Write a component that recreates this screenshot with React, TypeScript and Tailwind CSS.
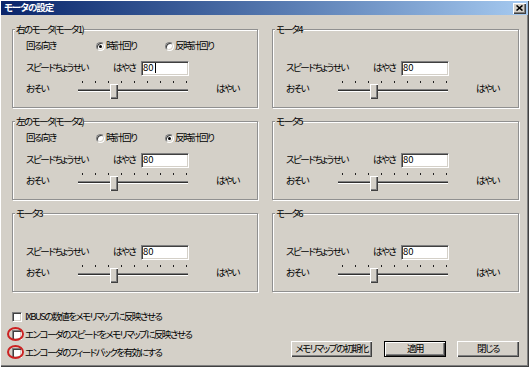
import React from 'react'

////////////////////////////////////////////////////////////////////////////////
// Interface & Data

type Direction = 'cw' | 'ccw'

interface Motor {
  title: string
  direction?: Direction
  speed: string
  caret?: boolean
}

// grid order: row by row, left then right
const MOTORS: Motor[] = [
  { title: '右のモータ(モータ1)', direction: 'cw', speed: '80', caret: true },
  { title: 'モータ4', speed: '80' },
  { title: '左のモータ(モータ2)', direction: 'ccw', speed: '80' },
  { title: 'モータ5', speed: '80' },
  { title: 'モータ3', speed: '80' },
  { title: 'モータ6', speed: '80' }
]

const TICKS = [0, 1, 2, 3, 4, 5, 6, 7, 8]

const SUNKEN =
  'border border-t-[#808080] border-l-[#808080] border-b-white border-r-white shadow-[inset_1px_1px_0_#404040,inset_-1px_-1px_0_#d4d0c8]'
const RAISED =
  'bg-[#d4d0c8] shadow-[inset_1px_1px_0_#fff,inset_-1px_-1px_0_#404040,inset_-2px_-2px_0_#808080]'

////////////////////////////////////////////////////////////////////////////////
// Components

const TitleBar = () => (
  <div className="mx-[1px] mt-[1px] h-[14px] flex items-center pl-[3px] pr-[2px] bg-linear-to-r from-[#0a246a] to-[#a6caf0]">
    <span className="text-white font-bold tracking-[-1px]">モータの設定</span>
    <button className={`ml-auto w-[13px] h-[11px] flex items-center justify-center ${RAISED}`}>
      <svg width="7" height="6" viewBox="0 0 7 6">
        <path d="M0.5 0.5 L6.5 5.5 M6.5 0.5 L0.5 5.5" stroke="black" strokeWidth="1.6" />
      </svg>
    </button>
  </div>
)

const Radio = ({ checked }: { checked?: boolean }) => (
  <span className={`w-[9px] h-[9px] rounded-full bg-white flex items-center justify-center ${SUNKEN}`}>
    {checked && <span className="w-[3px] h-[3px] rounded-full bg-black" />}
  </span>
)

const SpeedInput = ({ value, caret }: { value: string; caret?: boolean }) => (
  <div className={`w-[48px] h-[15px] bg-white flex items-center pl-[1px] tracking-normal ${SUNKEN}`}>
    <span>{value}</span>
    {caret && <span className="ml-[1px] w-px h-[10px] bg-black" />}
  </div>
)

const Slider = () => (
  <div className="relative w-[110px] h-[20px]">
    <div className="mt-[2px] pl-[4px] pr-[1px] flex justify-between">
      {TICKS.map((t) => (
        <span key={t} className="w-px h-[2px] bg-[#202020]" />
      ))}
    </div>
    <div className="mt-[6px] h-[3px] border-t border-t-[#808080] border-b border-b-white bg-[#303030]" />
    <span className={`absolute left-[32px] top-[5px] w-[8px] h-[15px] ${RAISED}`} />
  </div>
)

const MotorGroup = ({ motor }: { motor: Motor }) => {
  const { title, direction, speed, caret } = motor

  return (
    <fieldset className="h-[85px] min-w-0 border border-[#909090] shadow-[inset_1px_1px_0_#fff,1px_1px_0_#fff]">
      <legend className="ml-[2px] px-[1px] leading-[12px] bg-[#d4d0c8]">{title}</legend>
      <div className="pl-[13px] pt-[3px] flex flex-col">
        <div className="h-[16px] flex items-center">
          {direction && (
            <>
              <span className="w-[70px]">回る向き</span>
              <span className="w-[69px] flex items-center gap-[1px]">
                <Radio checked={direction === 'cw'} />
                <span>時計回り</span>
              </span>
              <span className="flex items-center gap-[1px]">
                <Radio checked={direction === 'ccw'} />
                <span>反時計回り</span>
              </span>
            </>
          )}
        </div>
        <div className="mt-[6px] h-[16px] flex items-center">
          <span className="w-[87px]">スピードちょうせい</span>
          <span className="w-[28px]">はやさ</span>
          <SpeedInput value={speed} caret={caret} />
        </div>
        <div className="mt-[3px] h-[20px] flex items-center">
          <span className="w-[52px]">おそい</span>
          <Slider />
          <span className="ml-[28px]">はやい</span>
        </div>
      </div>
    </fieldset>
  )
}

const CheckRow = ({ label, marked }: { label: string; marked?: boolean }) => (
  <div className="h-[18px] flex items-center gap-[3px]">
    <span className={`relative w-[10px] h-[10px] bg-white ${SUNKEN}`}>
      {marked && (
        <span className="absolute -left-[6px] -top-[4px] w-[17px] h-[14px] rounded-[50%] border-2 border-[#cc2222]" />
      )}
    </span>
    <span>{label}</span>
  </div>
)

const Button = ({ label, className, isDefault }: { label: string; className: string; isDefault?: boolean }) => (
  <button
    className={`h-[16px] flex items-center justify-center whitespace-nowrap ${RAISED} ${isDefault ? 'border border-black' : ''} ${className}`}
  >
    {label}
  </button>
)

////////////////////////////////////////////////////////////////////////////////
// App

export default function App() {
  return (
    <div className="w-[529px] h-[367px] overflow-hidden flex flex-col bg-[#d4d0c8] text-black text-[9.5px] leading-none tracking-[-1.5px] font-['Noto_Sans_CJK_JP','Noto_Sans',sans-serif] [font-feature-settings:'palt'] shadow-[inset_1px_1px_0_#fff,inset_-1px_-1px_0_#404040,inset_-2px_-2px_0_#808080]">
      <TitleBar />
      <div className="flex flex-col pl-[12px] pr-[10px] pt-[8px]">
        <div className="grid grid-cols-[246px_247px] gap-x-[14px] gap-y-[7px]">
          {MOTORS.map((m) => (
            <MotorGroup key={m.title} motor={m} />
          ))}
        </div>
        <div className="flex pt-[16px]">
          <div className="flex flex-col">
            <CheckRow label="IXBUSの数値をメモリマップに反映させる" />
            <CheckRow label="エンコーダのスピードをメモリマップに反映させる" marked />
            <CheckRow label="エンコーダのフィードバックを有効にする" marked />
          </div>
          <div className="ml-auto self-end mb-[5px] flex">
            <Button label="メモリマップの初期化" className="w-[81px]" />
            <Button label="適用" className="ml-[12px] w-[62px]" isDefault />
            <Button label="閉じる" className="ml-[11px] w-[62px]" />
          </div>
        </div>
      </div>
    </div>
  )
}
